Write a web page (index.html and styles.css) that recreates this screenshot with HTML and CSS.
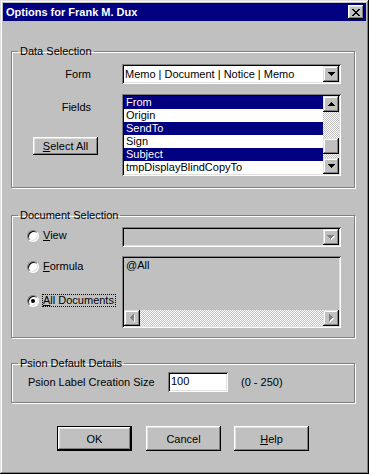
FILE: index.html
```html
<!DOCTYPE html>
<html lang="en">
<head>
    <meta charset="UTF-8">
    <meta name="viewport" content="width=device-width, initial-scale=1.0">
    <title>Options for Frank M. Dux</title>
    <link rel="stylesheet" href="styles.css">
</head>
<body>
    <div class="window">
        <div class="titlebar">
            <span class="title">Options for Frank M. Dux</span>
            <button class="close" type="button">
                <svg width="8" height="7" viewBox="0 0 8 7" shape-rendering="crispEdges"><path d="M0 0h2v1H0zM6 0h2v1H6zM1 1h2v1H1zM5 1h2v1H5zM2 2h4v1H2zM3 3h2v1H3zM2 4h4v1H2zM1 5h2v1H1zM5 5h2v1H5zM0 6h2v1H0zM6 6h2v1H6z" fill="#000"/></svg>
            </button>
        </div>

        <div class="content">
            <fieldset class="group data">
                <legend>Data Selection</legend>
                <div class="form-row">
                    <label class="lbl">Form</label>
                    <div class="combo">
                        <span class="combo-text">Memo | Document | Notice | Memo</span>
                        <span class="sbtn"><svg width="7" height="4" viewBox="0 0 7 4" shape-rendering="crispEdges"><path d="M0 0h7v1H0zM1 1h5v1H1zM2 2h3v1H2zM3 3h1v1H3z" fill="#000"/></svg></span>
                    </div>
                </div>
                <div class="fields-row">
                    <div class="side">
                        <label class="lbl">Fields</label>
                        <button class="btn select-all" type="button"><u>S</u>elect All</button>
                    </div>
                    <div class="listbox">
                        <ul class="items">
                            <li class="sel">From</li>
                            <li>Origin</li>
                            <li class="sel">SendTo</li>
                            <li>Sign</li>
                            <li class="sel">Subject</li>
                            <li>tmpDisplayBlindCopyTo</li>
                        </ul>
                        <div class="vscroll">
                            <span class="sbtn"><svg width="7" height="4" viewBox="0 0 7 4" shape-rendering="crispEdges"><path d="M3 0h1v1H3zM2 1h3v1H2zM1 2h5v1H1zM0 3h7v1H0z" fill="#000"/></svg></span>
                            <div class="track"><span class="thumb"></span></div>
                            <span class="sbtn"><svg width="7" height="4" viewBox="0 0 7 4" shape-rendering="crispEdges"><path d="M0 0h7v1H0zM1 1h5v1H1zM2 2h3v1H2zM3 3h1v1H3z" fill="#000"/></svg></span>
                        </div>
                    </div>
                </div>
            </fieldset>

            <fieldset class="group doc">
                <legend>Document Selection</legend>
                <div class="doc-grid">
                    <div class="option view-opt">
                        <span class="radio"></span>
                        <span class="opt-text"><u>V</u>iew</span>
                    </div>
                    <div class="combo disabled">
                        <span class="combo-text"></span>
                        <span class="sbtn"><svg width="8" height="5" viewBox="0 0 8 5" shape-rendering="crispEdges"><path d="M1 1h7v1H1zM2 2h5v1H2zM3 3h3v1H3zM4 4h1v1H4z" fill="#fff"/><path d="M0 0h7v1H0zM1 1h5v1H1zM2 2h3v1H2zM3 3h1v1H3z" fill="#808080"/></svg></span>
                    </div>
                    <div class="options">
                        <div class="option">
                            <span class="radio"></span>
                            <span class="opt-text"><u>F</u>ormula</span>
                        </div>
                        <div class="option">
                            <span class="radio"><span class="dot"></span></span>
                            <span class="opt-text focus"><u>A</u>ll Documents</span>
                        </div>
                    </div>
                    <div class="formula">
                        <div class="formula-text">@All</div>
                        <div class="hscroll">
                            <span class="sbtn"><svg width="5" height="8" viewBox="0 0 5 8" shape-rendering="crispEdges"><path d="M4 1h1v1H4zM3 2h2v1H3zM2 3h3v1H2zM1 4h4v1H1zM2 5h3v1H2zM3 6h2v1H3zM4 7h1v1H4z" fill="#fff"/><path d="M3 0h1v1H3zM2 1h2v1H2zM1 2h3v1H1zM0 3h4v1H0zM1 4h3v1H1zM2 5h2v1H2zM3 6h1v1H3z" fill="#808080"/></svg></span>
                            <div class="track"></div>
                            <span class="sbtn"><svg width="5" height="8" viewBox="0 0 5 8" shape-rendering="crispEdges"><path d="M1 1h1v1H1zM1 2h2v1H1zM1 3h3v1H1zM1 4h4v1H1zM1 5h3v1H1zM1 6h2v1H1zM1 7h1v1H1z" fill="#fff"/><path d="M0 0h1v1H0zM0 1h2v1H0zM0 2h3v1H0zM0 3h4v1H0zM0 4h3v1H0zM0 5h2v1H0zM0 6h1v1H0z" fill="#808080"/></svg></span>
                        </div>
                    </div>
                </div>
            </fieldset>

            <fieldset class="group psion">
                <legend>Psion Default Details</legend>
                <div class="psion-row">
                    <label class="psion-lbl">Psion Label Creation Size</label>
                    <div class="field">100</div>
                    <span class="range">(0 - 250)</span>
                </div>
            </fieldset>

            <div class="buttons">
                <button class="btn default" type="button">OK</button>
                <button class="btn cancel" type="button">Cancel</button>
                <button class="btn help" type="button"><u>H</u>elp</button>
            </div>
        </div>
    </div>
</body>
</html>
```

FILE: styles.css
```css
* {
    box-sizing: border-box;
}
body {
    margin: 0;
    overflow: hidden;
    background: #c0c0c0;
    font-family: "Liberation Sans", Arial, sans-serif;
    font-size: 11px;
    color: #000;
}
.window {
    width: 369px;
    height: 474px;
    padding: 3px;
    background: #c0c0c0;
    box-shadow: inset -1px -1px #000, inset 1px 1px #dfdfdf, inset -2px -2px #808080, inset 2px 2px #fff;
}
.titlebar {
    height: 18px;
    background: #000080;
    color: #fff;
    display: flex;
    align-items: center;
    justify-content: space-between;
    padding: 0 2px 0 3px;
}
.title {
    font-weight: bold;
    font-size: 11px;
}
.close {
    width: 16px;
    height: 14px;
    padding: 0;
    border: none;
    background: #c0c0c0;
    display: flex;
    align-items: center;
    justify-content: center;
    box-shadow: inset -1px -1px #000, inset 1px 1px #fff, inset -2px -2px #808080, inset 2px 2px #dfdfdf;
}
.content {
    padding-left: 8px;
}

/* group boxes */
.group {
    width: 344px;
    margin: 0;
    padding: 0;
    min-width: 0;
    border: 1px solid #808080;
    box-shadow: inset 1px 1px #fff, 1px 1px #fff;
}
.group legend {
    margin-left: 6px;
    padding: 0 2px;
    line-height: 13px;
}
.data {
    margin-top: 24px;
    padding: 6px 0 11px 0;
}
.doc {
    margin-top: 21px;
    padding: 5px 0 9px 0;
}
.psion {
    margin-top: 19px;
    padding: 2px 0 10px 0;
}

/* 3d bits */
.btn {
    font-family: inherit;
    font-size: 11px;
    color: #000;
    padding: 0;
    border: none;
    background: #c0c0c0;
    box-shadow: inset -1px -1px #000, inset 1px 1px #fff, inset -2px -2px #808080, inset 2px 2px #dfdfdf;
}
.btn.default {
    box-shadow: inset 0 0 0 1px #000, inset -2px -2px #000, inset 2px 2px #fff, inset -3px -3px #808080, inset 3px 3px #dfdfdf;
}
.sbtn {
    width: 16px;
    height: 16px;
    flex: none;
    display: flex;
    align-items: center;
    justify-content: center;
    background: #c0c0c0;
    box-shadow: inset -1px -1px #000, inset 1px 1px #dfdfdf, inset -2px -2px #808080, inset 2px 2px #fff;
}
.track {
    flex: 1;
    background: repeating-conic-gradient(#c0c0c0 0 25%, #fff 0 50%) 0 0 / 2px 2px;
}

/* data selection */
.form-row {
    display: flex;
    align-items: center;
}
.lbl {
    width: 79px;
    text-align: right;
    line-height: 13px;
}
.combo {
    margin-left: 31px;
    width: 219px;
    height: 20px;
    padding: 2px;
    display: flex;
    align-items: center;
    background: #fff;
    box-shadow: inset 1px 1px #808080, inset -1px -1px #fff, inset 2px 2px #000, inset -2px -2px #dfdfdf;
}
.combo-text {
    flex: 1;
    padding-left: 1px;
    white-space: nowrap;
    overflow: hidden;
}
.combo.disabled {
    margin-left: 0;
    background: #c0c0c0;
}
.fields-row {
    display: flex;
    margin-top: 10px;
}
.side {
    width: 110px;
    display: flex;
    flex-direction: column;
    align-items: flex-start;
}
.side .lbl {
    padding-top: 7px;
}
.select-all {
    margin: 23px 0 0 21px;
    width: 65px;
    height: 18px;
}
.listbox {
    width: 219px;
    height: 82px;
    padding: 2px;
    display: flex;
    background: #fff;
    box-shadow: inset 1px 1px #808080, inset -1px -1px #fff, inset 2px 2px #000, inset -2px -2px #dfdfdf;
}
.items {
    flex: 1;
    list-style: none;
    margin: 0;
    padding: 0;
}
.items li {
    height: 13px;
    line-height: 13px;
    padding-left: 2px;
    white-space: nowrap;
}
.items li.sel {
    background: #000080;
    color: #fff;
}
.vscroll {
    width: 16px;
    display: flex;
    flex-direction: column;
}
.vscroll .track {
    padding-top: 26px;
}
.thumb {
    display: block;
    width: 16px;
    height: 16px;
    background: #c0c0c0;
    box-shadow: inset -1px -1px #000, inset 1px 1px #dfdfdf, inset -2px -2px #808080, inset 2px 2px #fff;
}

/* document selection */
.doc-grid {
    display: grid;
    grid-template-columns: 110px 219px;
    grid-template-rows: 20px 72px;
    row-gap: 9px;
}
.option {
    display: flex;
    align-items: center;
    margin-left: 15px;
    height: 13px;
}
.view-opt {
    margin-top: 2px;
}
.radio {
    width: 12px;
    height: 12px;
    flex: none;
    border-radius: 50%;
    background: #fff;
    border: 1px solid;
    border-color: #808080 #fff #fff #808080;
    box-shadow: inset 1px 1px #000, inset -1px -1px #dfdfdf;
    display: flex;
    align-items: center;
    justify-content: center;
}
.dot {
    width: 4px;
    height: 4px;
    border-radius: 50%;
    background: #000;
}
.opt-text {
    margin-left: 3px;
    line-height: 11px;
    border: 1px solid transparent;
    padding: 0 1px 0 0;
}
.opt-text.focus {
    border: 1px dotted #000;
}
.options {
    display: flex;
    flex-direction: column;
    padding-top: 4px;
    gap: 21px;
}
.formula {
    padding: 2px;
    display: flex;
    flex-direction: column;
    background: #c0c0c0;
    box-shadow: inset 1px 1px #808080, inset -1px -1px #fff, inset 2px 2px #000, inset -2px -2px #dfdfdf;
}
.formula-text {
    flex: 1;
    padding: 1px 0 0 2px;
    line-height: 13px;
}
.hscroll {
    height: 16px;
    display: flex;
}

/* psion */
.psion-row {
    display: flex;
    align-items: center;
}
.psion-lbl {
    margin-left: 16px;
    width: 140px;
}
.field {
    width: 60px;
    height: 20px;
    padding: 3px 0 0 3px;
    line-height: 13px;
    background: #fff;
    box-shadow: inset 1px 1px #808080, inset -1px -1px #fff, inset 2px 2px #000, inset -2px -2px #dfdfdf;
}
.range {
    margin-left: 13px;
}

/* buttons */
.buttons {
    display: flex;
    margin-top: 23px;
    padding-left: 46px;
}
.buttons .btn {
    width: 75px;
    height: 25px;
}
.buttons .cancel {
    margin-left: 14px;
}
.buttons .help {
    margin-left: 13px;
}
```
